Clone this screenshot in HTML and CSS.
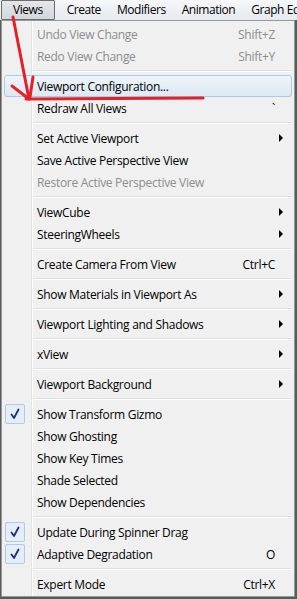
FILE: index.html
```html
<!DOCTYPE html>
<html>
<head>
<meta charset="utf-8">
<link rel="stylesheet" href="styles.css">
</head>
<body>
<div class="menubar">
  <span class="mb-item mb-active">Views</span>
  <span class="mb-item">Create</span>
  <span class="mb-item">Modifiers</span>
  <span class="mb-item">Animation</span>
  <span class="mb-item">Graph Ed</span>
</div>
<div class="menu">
  <div class="item disabled"><span class="g"></span><span class="l">Undo View Change</span><span class="k">Shift+Z</span><span class="a"></span></div>
  <div class="item disabled"><span class="g"></span><span class="l">Redo View Change</span><span class="k">Shift+Y</span><span class="a"></span></div>
  <div class="sep"></div>
  <div class="item hot"><span class="g"></span><span class="l">Viewport Configuration...</span><span class="k"></span><span class="a"></span></div>
  <div class="item"><span class="g"></span><span class="l">Redraw All Views</span><span class="k">`</span><span class="a"></span></div>
  <div class="sep"></div>
  <div class="item"><span class="g"></span><span class="l">Set Active Viewport</span><span class="k"></span><span class="a sub"></span></div>
  <div class="item"><span class="g"></span><span class="l">Save Active Perspective View</span><span class="k"></span><span class="a"></span></div>
  <div class="item disabled"><span class="g"></span><span class="l">Restore Active Perspective View</span><span class="k"></span><span class="a"></span></div>
  <div class="sep"></div>
  <div class="item"><span class="g"></span><span class="l">ViewCube</span><span class="k"></span><span class="a sub"></span></div>
  <div class="item"><span class="g"></span><span class="l">SteeringWheels</span><span class="k"></span><span class="a sub"></span></div>
  <div class="sep"></div>
  <div class="item"><span class="g"></span><span class="l">Create Camera From View</span><span class="k">Ctrl+C</span><span class="a"></span></div>
  <div class="sep"></div>
  <div class="item"><span class="g"></span><span class="l">Show Materials in Viewport As</span><span class="k"></span><span class="a sub"></span></div>
  <div class="sep"></div>
  <div class="item"><span class="g"></span><span class="l">Viewport Lighting and Shadows</span><span class="k"></span><span class="a sub"></span></div>
  <div class="sep"></div>
  <div class="item"><span class="g"></span><span class="l">xView</span><span class="k"></span><span class="a sub"></span></div>
  <div class="sep"></div>
  <div class="item"><span class="g"></span><span class="l">Viewport Background</span><span class="k"></span><span class="a sub"></span></div>
  <div class="sep"></div>
  <div class="item"><span class="g"><span class="check"><svg viewBox="0 0 20 20" width="20" height="20"><path d="M6.5 10.5 L9 14 L13.5 5.5" fill="none" stroke="#1d2f7a" stroke-width="1.8" stroke-linecap="round" stroke-linejoin="round"/></svg></span></span><span class="l">Show Transform Gizmo</span><span class="k"></span><span class="a"></span></div>
  <div class="item"><span class="g"></span><span class="l">Show Ghosting</span><span class="k"></span><span class="a"></span></div>
  <div class="item"><span class="g"></span><span class="l">Show Key Times</span><span class="k"></span><span class="a"></span></div>
  <div class="item"><span class="g"></span><span class="l">Shade Selected</span><span class="k"></span><span class="a"></span></div>
  <div class="item"><span class="g"></span><span class="l">Show Dependencies</span><span class="k"></span><span class="a"></span></div>
  <div class="sep"></div>
  <div class="item"><span class="g"><span class="check"><svg viewBox="0 0 20 20" width="20" height="20"><path d="M6.5 10.5 L9 14 L13.5 5.5" fill="none" stroke="#1d2f7a" stroke-width="1.8" stroke-linecap="round" stroke-linejoin="round"/></svg></span></span><span class="l">Update During Spinner Drag</span><span class="k"></span><span class="a"></span></div>
  <div class="item"><span class="g"><span class="check"><svg viewBox="0 0 20 20" width="20" height="20"><path d="M6.5 10.5 L9 14 L13.5 5.5" fill="none" stroke="#1d2f7a" stroke-width="1.8" stroke-linecap="round" stroke-linejoin="round"/></svg></span></span><span class="l">Adaptive Degradation</span><span class="k">O</span><span class="a"></span></div>
  <div class="sep"></div>
  <div class="item"><span class="g"></span><span class="l">Expert Mode</span><span class="k">Ctrl+X</span><span class="a"></span></div>
</div>
<svg class="annot" width="297" height="599" viewBox="0 0 297 599">
  <g stroke="#e3212b" stroke-width="3" stroke-linecap="round" fill="none">
    <line x1="13" y1="17" x2="29" y2="99"/>
    <line x1="12" y1="86" x2="29" y2="99"/>
    <line x1="33" y1="77" x2="30" y2="97"/>
    <line x1="26" y1="99" x2="203" y2="98"/>
  </g>
</svg>
</body>
</html>
```
FILE: styles.css
```css
html, body {
  margin: 0;
  padding: 0;
}
body {
  width: 297px;
  height: 599px;
  overflow: hidden;
  background: #5a5a5a;
  font-family: "Open Sans", "Noto Sans", sans-serif;
  font-size: 12px;
  letter-spacing: -0.3px;
  color: #000;
  position: relative;
}
.menubar {
  height: 20px;
  display: flex;
  align-items: center;
  background: linear-gradient(#f6f7f9, #e6e9ee);
  white-space: nowrap;
  overflow: hidden;
  letter-spacing: -0.45px;
}
.mb-item {
  padding: 0 7px;
  line-height: 18px;
  border: 1px solid transparent;
  flex: none;
}
.mb-item:first-child {
  margin-left: 1px;
  margin-right: 4px;
  padding: 0 11px;
}
.mb-active {
  border-color: #6d6d6d;
  background: linear-gradient(#e4e6e9, #d3d6db);
  border-radius: 1px;
}
.menu {
  margin-left: 1px;
  width: 288px;
  border: 1px solid #979797;
  padding: 2px 2px 1px 2px;
  background:
    linear-gradient(to right, transparent 29px, #e2e3e3 29px, #e2e3e3 30px, #ffffff 30px, #ffffff 31px, transparent 31px),
    #f0f0f0;
}
.item {
  display: grid;
  grid-template-columns: 32px 1fr auto 16px;
  height: 22px;
  align-items: center;
  border: 1px solid transparent;
  border-radius: 3px;
  box-sizing: border-box;
}
.item.hot {
  background: linear-gradient(#eef4f9, #dde8f2);
  border-color: #a9cce6;
}
.item.disabled {
  color: #8d8d8d;
}
.g {
  height: 20px;
  display: flex;
  align-items: center;
}
.check {
  width: 20px;
  height: 20px;
  border: 1px solid #aecbe9;
  border-radius: 2px;
  background: #e5edf7;
  display: flex;
  align-items: center;
  justify-content: center;
  box-sizing: border-box;
}
.check svg {
  flex: none;
}
.l {
  white-space: nowrap;
}
.k {
  text-align: right;
  white-space: nowrap;
}
.a {
  height: 20px;
  position: relative;
}
.a.sub::after {
  content: "";
  position: absolute;
  left: 4px;
  top: 6px;
  border-left: 4px solid #000;
  border-top: 4px solid transparent;
  border-bottom: 4px solid transparent;
}
.sep {
  height: 8px;
  margin-left: 29px;
  position: relative;
}
.sep::before {
  content: "";
  position: absolute;
  left: 0;
  right: 0;
  top: 3px;
  height: 1px;
  background: #e0e0e0;
  border-bottom: 1px solid #ffffff;
}
.annot {
  position: absolute;
  left: 0;
  top: 0;
  pointer-events: none;
}
```
